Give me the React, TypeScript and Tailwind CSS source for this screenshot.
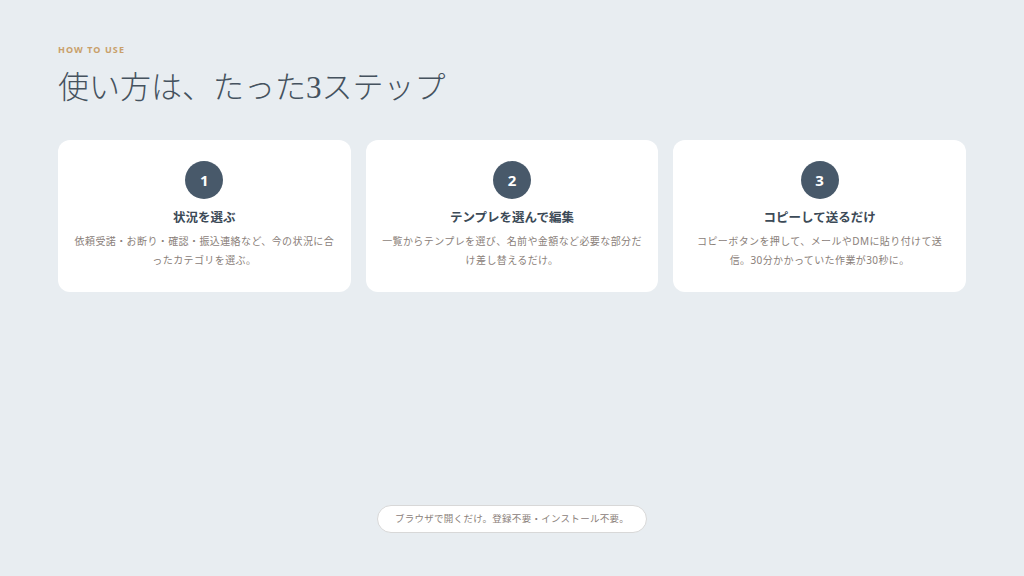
import React from 'react';

const steps = [
    {n: '1', title: '状況を選ぶ', desc: '依頼受諾・お断り・確認・振込連絡など、今の状況に合ったカテゴリを選ぶ。'},
    {n: '2', title: 'テンプレを選んで編集', desc: '一覧からテンプレを選び、名前や金額など必要な部分だけ差し替えるだけ。'},
    {n: '3', title: 'コピーして送るだけ', desc: 'コピーボタンを押して、メールやDMに貼り付けて送信。30分かかっていた作業が30秒に。'},
];

export default function App() {
    return <div className="h-[576px] w-full bg-[#e8edf1] flex flex-col px-[58px] pt-[45px] pb-[43px]" style={{fontFamily: '"Noto Sans", "Noto Sans CJK JP", sans-serif'}}>
        <p className="text-[9px] font-bold tracking-[0.12em] text-[#c9a06a] leading-none">HOW TO USE</p>
        <h1 className="mt-[14px] text-[31px] text-[#45525e] font-light leading-[40px]" style={{fontFamily: '"Liberation Serif", "Noto Sans CJK JP", serif'}}>使い方は、たった3ステップ</h1>
        <div className="mt-[32px] grid grid-cols-3 gap-[15px] w-[908px]">
            {steps.map((s) => (
                <div key={s.n} className="bg-white rounded-[12px] h-[152px] flex flex-col items-center pt-[21px] px-[16px]">
                    <div className="w-[38px] h-[38px] rounded-full bg-[#48596a] text-white flex items-center justify-center text-[15px] font-bold">{s.n}</div>
                    <h3 className="mt-[10px] text-[12.5px] font-bold text-[#3c4a57] leading-[18px]">{s.title}</h3>
                    <p className="mt-[5px] text-[10px] text-[#8a8079] text-center leading-[19px] tracking-[0.04em]">{s.desc}</p>
                </div>
            ))}
        </div>
        <div className="flex-1" />
        <div className="self-center bg-white border border-[#d8d8d8] rounded-full w-[270px] h-[28px] flex items-center justify-center text-[9.5px] text-[#8a8079] tracking-[0.03em]">ブラウザで開くだけ。登録不要・インストール不要。</div>
    </div>;
}
